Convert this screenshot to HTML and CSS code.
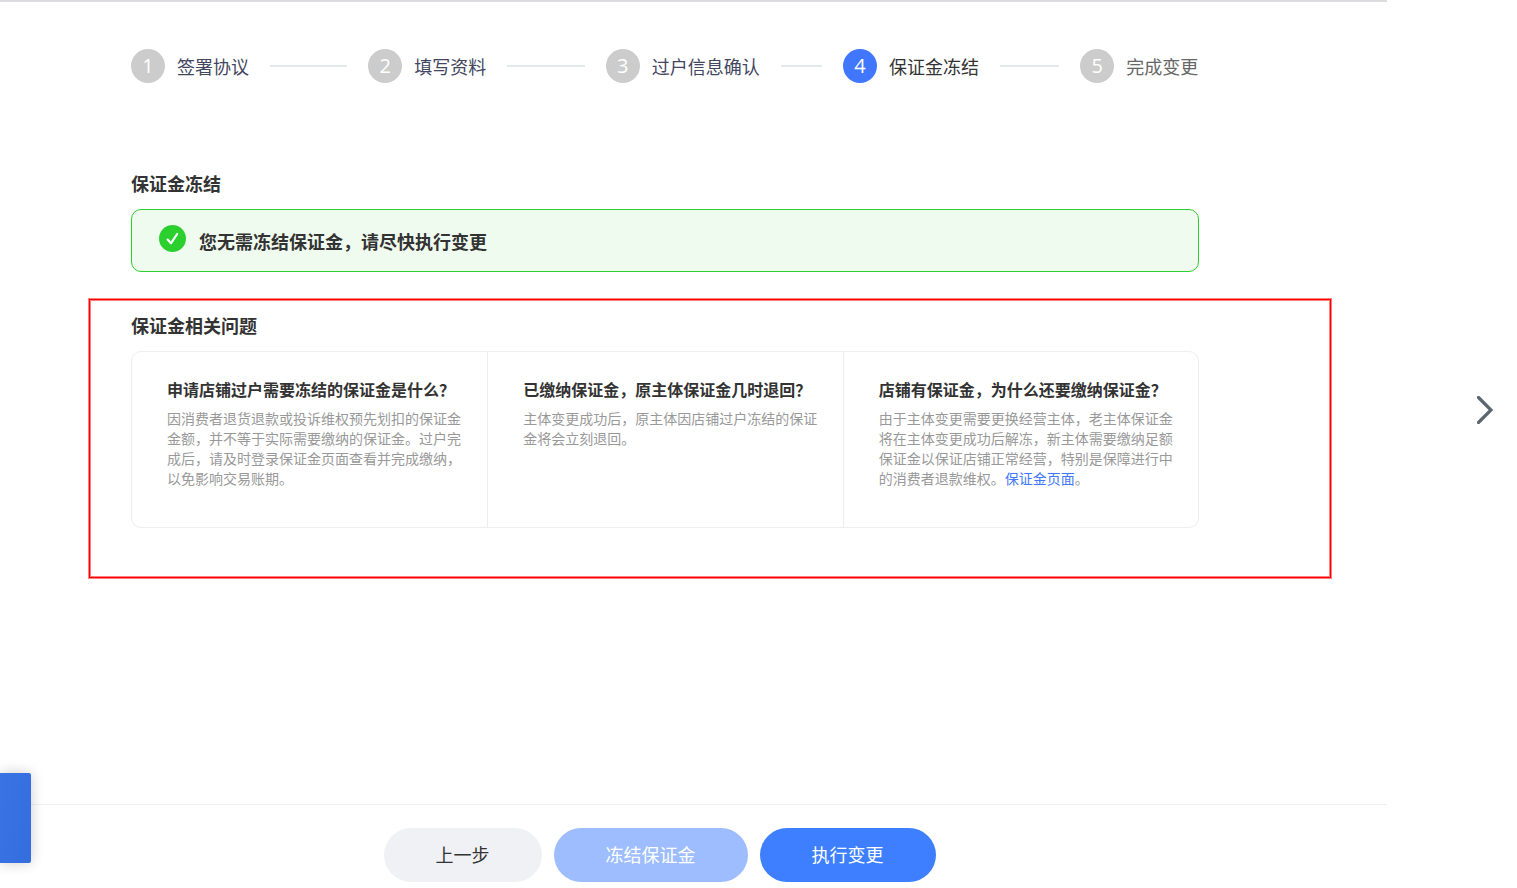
FILE: index.html
```
<!DOCTYPE html>
<html lang="zh-CN">
<head>
  <meta charset="UTF-8">
  <meta name="viewport" content="width=device-width, initial-scale=1.0">
  <link rel="stylesheet" href="styles.css">
  <title>保证金冻结</title>
</head>
<body>
  <div class="page">
    <main class="main">
      <ol class="steps">
        <li class="step done"><span class="num">1</span><span>签署协议</span><i class="line"></i></li>
        <li class="step done"><span class="num">2</span><span>填写资料</span><i class="line"></i></li>
        <li class="step done"><span class="num">3</span><span>过户信息确认</span><i class="line"></i></li>
        <li class="step active"><span class="num">4</span><span>保证金冻结</span><i class="line"></i></li>
        <li class="step"><span class="num">5</span><span>完成变更</span></li>
      </ol>

      <section class="freeze">
        <h2 class="title">保证金冻结</h2>
        <div class="notice">
          <svg class="ok" viewBox="0 0 27 27">
            <circle cx="13.5" cy="13.5" r="13.5" fill="#2bd02f"/>
            <path d="M8.6 14.6l3.4 3.6L18.2 9" fill="none" stroke="#fff" stroke-width="2.2" stroke-linecap="round" stroke-linejoin="round"/>
          </svg>
          <p class="notice-text">您无需冻结保证金，请尽快执行变更</p>
        </div>
      </section>

      <section class="faq">
        <h2 class="title">保证金相关问题</h2>
        <div class="cards">
          <div class="card">
            <h3>申请店铺过户需要冻结的保证金是什么？</h3>
            <p>因消费者退货退款或投诉维权预先划扣的保证金金额，并不等于实际需要缴纳的保证金。过户完成后，请及时登录保证金页面查看并完成缴纳，以免影响交易账期。</p>
          </div>
          <div class="card">
            <h3>已缴纳保证金，原主体保证金几时退回？</h3>
            <p>主体变更成功后，原主体因店铺过户冻结的保证金将会立刻退回。</p>
          </div>
          <div class="card">
            <h3>店铺有保证金，为什么还要缴纳保证金？</h3>
            <p>由于主体变更需要更换经营主体，老主体保证金将在主体变更成功后解冻，新主体需要缴纳足额保证金以保证店铺正常经营，特别是保障进行中的消费者退款维权。<a href="#">保证金页面</a>。</p>
          </div>
        </div>
      </section>

      <footer class="footer">
        <button type="button" class="btn">上一步</button>
        <button type="button" class="btn light">冻结保证金</button>
        <button type="button" class="btn primary">执行变更</button>
      </footer>
    </main>

    <aside class="side">
      <button type="button" class="next" aria-label="下一页">
        <svg viewBox="0 0 16 28">
          <path d="M1.5 1.5L14 14L1.5 26.5" fill="none" stroke="#5c6670" stroke-width="3.2" stroke-linecap="round"/>
        </svg>
      </button>
    </aside>
  </div>
  <div class="tab"></div>
</body>
</html>
```
FILE: styles.css
```
* {
  box-sizing: border-box;
}

body {
  margin: 0;
  font-family: "Noto Sans CJK SC", sans-serif;
  font-size: 14px;
  color: #333;
  background: #fff;
}

h2, h3, p, ol {
  margin: 0;
  padding: 0;
}

.page {
  display: flex;
  min-height: 100vh;
}

.main {
  flex: 1;
  display: flex;
  flex-direction: column;
  border-top: 2px solid #dcdbe0;
}

/* steps */
.steps {
  display: grid;
  grid-template-columns: repeat(4, minmax(0, 2fr)) minmax(0, 1fr);
  margin: 47px 188px 0 131px;
  list-style: none;
}

.step {
  display: flex;
  align-items: center;
  font-size: 18px;
  line-height: 32px;
  color: #666;
  white-space: nowrap;
}

.step.done {
  color: #434660;
}

.step.active {
  color: #333;
}

.num {
  width: 34px;
  height: 34px;
  margin-right: 12px;
  border-radius: 50%;
  background: #ccc;
  color: #fff;
  font-family: "Open Sans", sans-serif;
  font-size: 20px;
  line-height: 34px;
  text-align: center;
}

.active .num {
  background: #4177ff;
}

.line {
  flex: 1;
  height: 2px;
  margin: 0 21px;
  background: #e4e9ee;
}

.title {
  margin-bottom: 14px;
  font-size: 18px;
  line-height: 24px;
}

/* notice */
.freeze {
  margin: 88px 188px 0 131px;
}

.notice {
  display: flex;
  padding: 15px 27px 13px;
  border: 1px solid #2bd02f;
  border-radius: 10px;
  background: #f0fbf0;
}

.ok {
  width: 27px;
  height: 27px;
  margin-right: 13px;
}

.notice-text {
  font-size: 18px;
  font-weight: bold;
  line-height: 33px;
}

/* questions */
.faq {
  margin: 27px 56px 24px 89px;
  padding: 13px 131px 49px 41px;
  border: 1px solid #f00;
  box-shadow: 0 0 0 1px rgba(255, 0, 0, .5), inset 0 0 0 1px rgba(255, 0, 0, .5);
}

.cards {
  display: grid;
  grid-template-columns: repeat(3, 1fr);
  border: 1px solid #eee;
  border-radius: 10px;
}

.card {
  padding: 25px 24px 39px 35px;
}

.card + .card {
  border-left: 1px solid #eee;
}

.card h3 {
  margin-bottom: 7px;
  font-size: 16px;
  line-height: 24px;
}

.card p {
  line-height: 20px;
  color: #999;
}

.card a {
  display: inline-block;
  color: #4177ff;
  text-decoration: none;
}

/* bottom buttons */
.footer {
  display: flex;
  justify-content: center;
  gap: 12px;
  margin-top: auto;
  padding: 23px 68px 6px 0;
  border-top: 1px solid #f0f0f0;
}

.btn {
  height: 54px;
  padding: 0 52px 2px;
  border: 0;
  border-radius: 27px;
  background: #f0f1f5;
  color: #333;
  font-family: inherit;
  font-size: 18px;
  cursor: pointer;
}

.btn.light {
  background: #9dbdff;
  color: #fff;
}

.btn.primary {
  background: #3d7fff;
  color: #fff;
}

.side {
  display: flex;
  justify-content: flex-end;
  align-items: flex-start;
  width: 130px;
  padding: 396px 24px 0 0;
}

.next {
  padding: 0;
  border: 0;
  background: none;
  cursor: pointer;
}

.next svg {
  display: block;
  width: 16px;
  height: 28px;
}

/* blue tab stuck to the left edge */
.tab {
  position: fixed;
  left: 0;
  bottom: 25px;
  width: 31px;
  height: 90px;
  border-radius: 0 2px 2px 0;
  background: linear-gradient(100deg, #3a74e4, #346ede);
  box-shadow: 0 0 14px rgba(0, 0, 0, .2);
}
```
